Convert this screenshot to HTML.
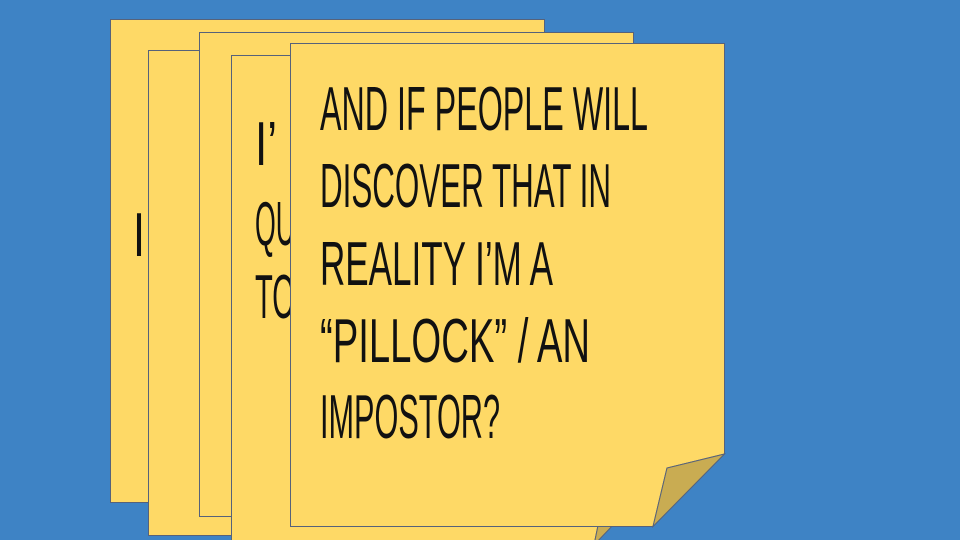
<!DOCTYPE html>
<html><head><style>
body{margin:0;width:960px;height:540px;overflow:hidden;background:#3e83c5;}
svg{display:block}
</style></head><body>
<svg width="960" height="540" viewBox="0 0 960 540" xmlns="http://www.w3.org/2000/svg">
<g stroke="#56627a" stroke-width="1" fill="#fed966">
<rect x="110.5" y="19.5" width="434" height="483"/>
<text x="133" y="256" font-family="Liberation Sans Narrow, Liberation Sans, sans-serif" font-size="62" stroke="none" fill="#111" textLength="12" lengthAdjust="spacingAndGlyphs">I</text>
<rect x="148.5" y="50.5" width="434" height="485"/>
<rect x="199.5" y="32.5" width="434" height="484"/>
<polygon points="231.5,55.5 665.5,55.5 665.5,470 607,482 594,545 231.5,545"/>
<polygon points="665.5,470 607,482 594,545" fill="#c9ac52"/>
<g stroke="none" fill="#111" font-family="Liberation Sans Narrow, Liberation Sans, sans-serif" font-size="62">
<text x="255" y="165" textLength="22" lengthAdjust="spacingAndGlyphs">I’</text>
<text x="255" y="245" textLength="40" lengthAdjust="spacingAndGlyphs">QU</text>
<text x="255" y="318" textLength="40" lengthAdjust="spacingAndGlyphs">TO</text>
</g>
<polygon points="290.5,43.5 724.5,43.5 724.5,454 667,468 653,526.5 290.5,526.5"/>
<polygon points="724.5,454 667,468 653,526.5" fill="#c9ac52"/>
</g>
<g fill="#111" font-family="Liberation Sans Narrow, Liberation Sans, sans-serif" font-size="62">
<text x="320" y="130" textLength="328" lengthAdjust="spacingAndGlyphs">AND IF PEOPLE WILL</text>
<text x="320" y="207" textLength="291" lengthAdjust="spacingAndGlyphs">DISCOVER THAT IN</text>
<text x="320" y="285" textLength="233" lengthAdjust="spacingAndGlyphs">REALITY I’M A</text>
<text x="320" y="362" textLength="270" lengthAdjust="spacingAndGlyphs">“PILLOCK” / AN</text>
<text x="320" y="438" textLength="180" lengthAdjust="spacingAndGlyphs">IMPOSTOR?</text>
</g>
</svg>
</body></html>
